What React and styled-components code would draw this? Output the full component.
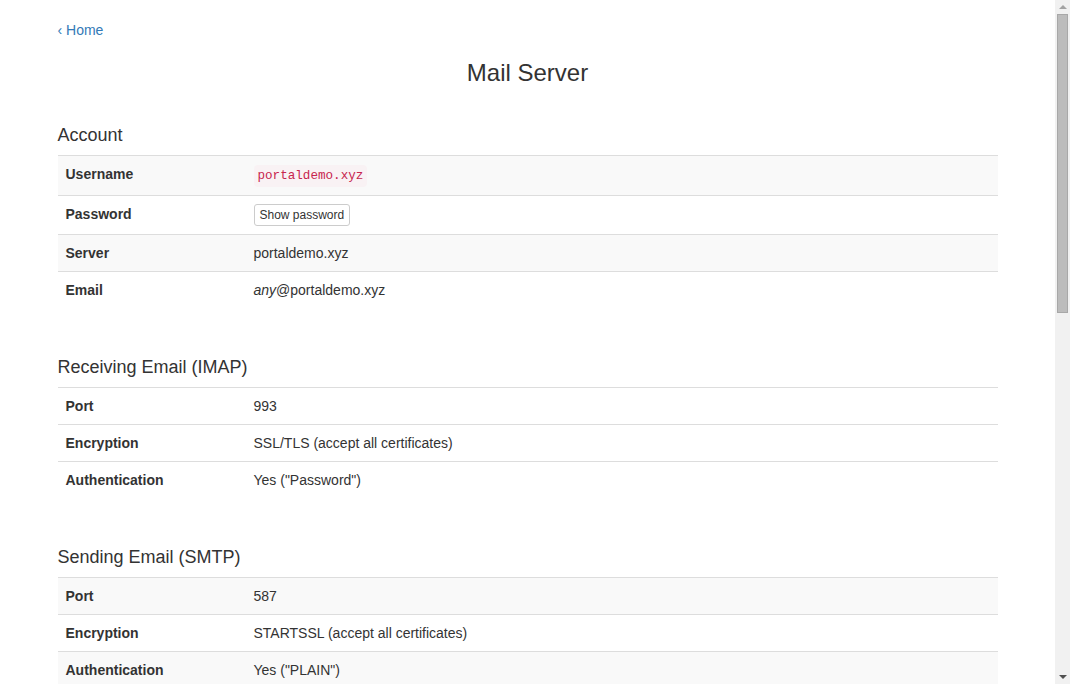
import React, { useState } from "react";
import styled, { createGlobalStyle } from "styled-components";

const GlobalStyle = createGlobalStyle`
  html, body {
    margin: 0;
    padding: 0;
    background: #fff;
  }
  body {
    padding-right: 15px;
    font-family: "Liberation Sans", Arial, Helvetica, sans-serif;
    font-size: 14px;
    line-height: 20px;
    color: #333;
  }
  * {
    box-sizing: border-box;
  }
`;

const Page = styled.div`
  width: 940px;
  margin: 0 auto;
  padding: 20px 0 40px;
  display: flex;
  flex-direction: column;
`;

const BackLink = styled.a`
  align-self: flex-start;
  color: #337ab7;
  text-decoration: none;
  line-height: 20px;
  cursor: pointer;
  &:hover {
    text-decoration: underline;
  }
`;

const Title = styled.h3`
  margin: 20px 0 0;
  font-size: 24px;
  font-weight: 500;
  line-height: 26px;
  text-align: center;
  color: #333;
`;

const Section = styled.section`
  display: flex;
  flex-direction: column;
  margin-top: ${(p) => (p.$first ? "39px" : "49px")};
`;

const Heading = styled.h4`
  margin: 0 0 10px;
  font-size: 18px;
  font-weight: 500;
  line-height: 20px;
  color: #333;
`;

const Table = styled.table`
  width: 100%;
  border-collapse: collapse;
  border-spacing: 0;
`;

const Row = styled.tr`
  background: ${(p) => (p.$striped ? "#f9f9f9" : "transparent")};
`;

const Label = styled.th`
  width: 20%;
  padding: 8px;
  text-align: left;
  font-weight: 700;
  vertical-align: top;
  border-top: 1px solid #ddd;
`;

const Value = styled.td`
  padding: 8px;
  vertical-align: top;
  border-top: 1px solid #ddd;
`;

const Code = styled.code`
  display: inline-block;
  padding: 2px 4px;
  font-family: "Liberation Mono", "Courier New", monospace;
  font-size: 12.6px;
  line-height: 18px;
  color: #c7254e;
  background: #f9f2f4;
  border-radius: 4px;
`;

const SmallButton = styled.button`
  display: inline-block;
  padding: 1px 5px;
  font-family: "Liberation Sans", Arial, sans-serif;
  font-size: 12px;
  line-height: 18px;
  color: #333;
  background: #fff;
  border: 1px solid #ccc;
  border-radius: 3px;
  cursor: pointer;
  vertical-align: top;
  &:hover {
    background: #e6e6e6;
    border-color: #adadad;
  }
`;

// the window's scrollbar, drawn over the right edge
const ScrollTrack = styled.div`
  position: fixed;
  top: 0;
  right: 0;
  bottom: 0;
  width: 15px;
  background: #f1f1f1;
  display: flex;
  flex-direction: column;
  align-items: center;
`;

const ScrollArrow = styled.div`
  flex: none;
  height: 14px;
  width: 100%;
  display: flex;
  align-items: center;
  justify-content: center;
  &::after {
    content: "";
    border-left: 4px solid transparent;
    border-right: 4px solid transparent;
    ${(p) =>
      p.$down
        ? "border-top: 4px solid #505050;"
        : "border-bottom: 4px solid #a3a3a3;"}
  }
`;

const ScrollThumb = styled.div`
  flex: none;
  width: 11px;
  height: 299px;
  background: #bcbcbc;
  border: 1px solid #a8a8a8;
`;

const ScrollSpace = styled.div`
  flex: 1;
`;

function InfoTable({ rows, striped }) {
  return (
    <Table>
      <tbody>
        {rows.map(([label, value], i) => (
          <Row key={label} $striped={striped && i % 2 === 0}>
            <Label>{label}</Label>
            <Value>{value}</Value>
          </Row>
        ))}
      </tbody>
    </Table>
  );
}

function Password() {
  const [shown, setShown] = useState(false);
  if (shown) return <Code>Xk29-pq7d-Lm04</Code>;
  return <SmallButton onClick={() => setShown(true)}>Show password</SmallButton>;
}

const domain = "portaldemo.xyz";

const sections = [
  {
    title: "Account",
    striped: true,
    rows: [
      ["Username", <Code>{domain}</Code>],
      ["Password", <Password />],
      ["Server", domain],
      ["Email", <><em>any</em>@{domain}</>],
    ],
  },
  {
    title: "Receiving Email (IMAP)",
    rows: [
      ["Port", "993"],
      ["Encryption", "SSL/TLS (accept all certificates)"],
      ["Authentication", 'Yes ("Password")'],
    ],
  },
  {
    title: "Sending Email (SMTP)",
    striped: true,
    rows: [
      ["Port", "587"],
      ["Encryption", "STARTSSL (accept all certificates)"],
      ["Authentication", 'Yes ("PLAIN")'],
    ],
  },
  {
    title: "Receiving Email (POP3)",
    rows: [
      ["Port", "995"],
      ["Encryption", "SSL/TLS (accept all certificates)"],
      ["Authentication", 'Yes ("Password")'],
    ],
  },
  {
    title: "Contacts (CardDAV)",
    striped: true,
    rows: [
      ["URL", `https://${domain}/carddav/`],
      ["Encryption", "SSL/TLS"],
      ["Authentication", "Same as account"],
    ],
  },
  {
    title: "Calendar (CalDAV)",
    rows: [
      ["URL", `https://${domain}/caldav/`],
      ["Encryption", "SSL/TLS"],
      ["Authentication", "Same as account"],
    ],
  },
  {
    title: "Webmail",
    striped: true,
    rows: [
      ["URL", `https://${domain}/mail/`],
      ["Username", domain],
      ["Password", "Same as account"],
    ],
  },
];

export default function App() {
  return (
    <>
      <GlobalStyle />
      <Page>
        <BackLink href="#">‹ Home</BackLink>
        <Title>Mail Server</Title>
        {sections.map((s, i) => (
          <Section key={s.title} $first={i === 0}>
            <Heading>{s.title}</Heading>
            <InfoTable rows={s.rows} striped={s.striped} />
          </Section>
        ))}
      </Page>
      <ScrollTrack aria-hidden="true">
        <ScrollArrow />
        <ScrollThumb />
        <ScrollSpace />
        <ScrollArrow $down />
      </ScrollTrack>
    </>
  );
}
